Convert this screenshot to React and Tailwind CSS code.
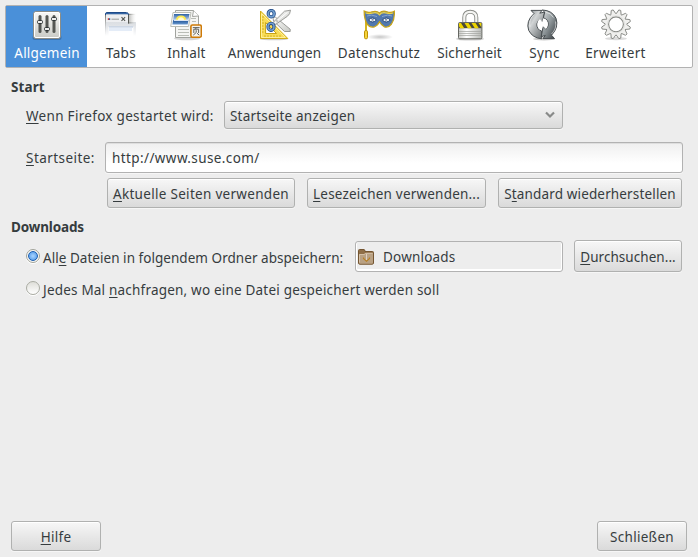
import React from "react";

function U({ children }) {
  return (
    <span className="underline decoration-1 underline-offset-[2px] [text-decoration-skip-ink:none]">
      {children}
    </span>
  );
}

function GeneralIcon() {
  return (
    <svg width="32" height="32" viewBox="0 0 32 32">
      <defs>
        <linearGradient id="gen" x1="0" y1="0" x2="0" y2="1">
          <stop offset="0" stopColor="#fafaf8" />
          <stop offset="1" stopColor="#c9cac5" />
        </linearGradient>
      </defs>
      <rect x="1.5" y="26" width="29" height="5" rx="2" fill="#1f3f66" opacity=".35" />
      <rect x="2.5" y="2.5" width="27" height="27" rx="2.5" fill="url(#gen)" stroke="#8b8d88" />
      <rect x="3.5" y="3.5" width="25" height="25" rx="1.5" fill="none" stroke="#fff" />
      <g fill="#555753">
        <rect x="7.5" y="6" width="3" height="18" rx="1.5" />
        <rect x="14.5" y="6" width="3" height="18" rx="1.5" />
        <rect x="21.5" y="6" width="3" height="18" rx="1.5" />
      </g>
      <g fill="#eeeeec" stroke="#2e3436">
        <rect x="6.5" y="11.5" width="5" height="3" rx="1" />
        <rect x="13.5" y="18.5" width="5" height="3" rx="1" />
        <rect x="20.5" y="8.5" width="5" height="3" rx="1" />
      </g>
    </svg>
  );
}

function TabsIcon() {
  return (
    <svg width="32" height="32" viewBox="0 0 32 32">
      <defs>
        <linearGradient id="tb" x1="0" y1="0" x2="0" y2="1">
          <stop offset="0" stopColor="#d3d7db" />
          <stop offset=".5" stopColor="#dfe2e6" />
          <stop offset="1" stopColor="#fff" />
        </linearGradient>
        <linearGradient id="tr" x1="0" y1="0" x2="1" y2="0">
          <stop offset="0" stopColor="#777974" />
          <stop offset="1" stopColor="#dddddb" stopOpacity="0" />
        </linearGradient>
        <linearGradient id="ts" x1="0" y1="0" x2="0" y2="1">
          <stop offset="0" stopColor="#6a6c68" />
          <stop offset="1" stopColor="#ddd" stopOpacity="0" />
        </linearGradient>
      </defs>
      <path d="M0 5H23V13H31V27H0Z" fill="url(#tb)" />
      <path d="M1 5.5H23V13H1Z" fill="#eeeff1" />
      <rect x="23" y="5" width="8" height="9" fill="url(#tr)" opacity=".6" />
      <path d="M23 4.8h8v1.2h-8zM23 13.5h7v1h-7z" fill="url(#tr)" />
      <rect x="0" y="5" width="1" height="22" fill="url(#ts)" />
      <path d="M23.5 5v9.5" stroke="#555753" />
      <path d="M.5 6V5Q.5 3.5 2 3.5H21.5Q23.5 3.5 23.5 6" fill="none" stroke="#204a87" />
      <path d="M1 4.6H23" stroke="#3465a4" strokeWidth="1.3" />
      <path d="M2.8 9.2h1.4v1.8H2.8z" fill="#cc3b3b" />
      <path d="M4 9.2h1.2v1.8H4z" fill="#3465a4" />
      <path d="M6.5 10.2h7.5" stroke="#999b98" />
      <path d="M16.5 8.2l3.6 3.6M20.1 8.2l-3.6 3.6" stroke="#555753" strokeWidth="1.1" />
      <rect x="3.5" y="18" width="25" height="9" fill="#fff" opacity=".9" />
      <path d="M4 18h24" stroke="#b7c8df" />
      <path d="M4 20.5h23" stroke="#e4ecf7" strokeWidth="3" />
    </svg>
  );
}

function ContentIcon() {
  return (
    <svg width="32" height="32" viewBox="0 0 32 32">
      <defs>
        <linearGradient id="sky" x1="0" y1="0" x2="0" y2="1">
          <stop offset="0" stopColor="#2c61a5" />
          <stop offset=".55" stopColor="#b5cde9" />
          <stop offset=".65" stopColor="#285b9d" />
          <stop offset="1" stopColor="#6b9ad0" />
        </linearGradient>
      </defs>
      <ellipse cx="17" cy="29.5" rx="13" ry="1.8" fill="#000" opacity=".16" />
      <path d="M5.5 1.5H23.5L28.5 7V28.5H5.5Z" fill="#f5f5f3" stroke="#a1a39e" />
      <path d="M23.5 1.5L22.5 7.5L28.5 7" fill="#fff" stroke="#a1a39e" />
      <path d="M8 20.5H19M8 23.5H19M8 26.5H19M21 9.5h5M22 12.5h4" stroke="#babdb6" />
      <path d="M3 3.5H21L18.5 17.5H.7Z" fill="#fff" stroke="#babdb6" />
      <path d="M4 5H19.5L17.7 15.5H2.4Z" fill="url(#sky)" />
      <path d="M6 11Q6 6.4 11 6.4T16 11Z" fill="#fce94f" />
      <path d="M8 11Q8 8.3 11 8.3T14 11Z" fill="#fffbd0" />
      <path d="M4 11.3h14" stroke="#fff" strokeWidth="1" />
      <rect x="20.9" y="16" width="10.4" height="12.2" rx="1.5" fill="#f6f4ee" stroke="#ce7a07" strokeWidth="1.6" />
      <path d="M22.8 18.6h6.8M26.2 18.6l-.7 1.6M23.8 24v-3.8h4.8V24M26.2 21.2v2.3l-2.9 2.6M27 24.2l2.3 2" fill="none" stroke="#5a5c58" strokeWidth=".95" />
    </svg>
  );
}

function AppsIcon() {
  return (
    <svg width="32" height="32" viewBox="0 0 32 32">
      <defs>
        <linearGradient id="bl" x1="0" y1="0" x2="1" y2="1">
          <stop offset="0" stopColor="#fff" />
          <stop offset="1" stopColor="#c8cac5" />
        </linearGradient>
      </defs>
      <ellipse cx="15" cy="30" rx="14" ry="1.3" fill="#000" opacity=".2" />
      <path d="M1.5 2V29.5H28.8Z" fill="#f9dc55" stroke="#d1ac16" />
      <path d="M2.6 4.6V28.4H26.3Z" fill="none" stroke="#fff1a0" />
      <path d="M6.6 13.5V24.5H17.5Z" fill="#fff" stroke="#c9a414" />
      <path d="M3 8h2M3 11h1.5M3 14h2M3 17h1.5M3 20h2M3 23h1.5M6 28v-1.7M9 28v-1.7M12 28v-1.7M15 28v-1.7M18 28v-1.7M21 28v-1.7" stroke="#c4a00f" strokeWidth=".8" />
      <path d="M14 8.5L16.5 8.2L31.2 20.2V22.5H25.5L14.5 12Z" fill="url(#bl)" stroke="#858783" strokeWidth=".8" />
      <path d="M13.5 14L25.5 2.2L31.5 1.2Q31.2 5.2 28.5 7.2L16.5 15.5Z" fill="url(#bl)" stroke="#858783" strokeWidth=".8" />
      <path d="M15.8 13.8L28.5 3.3" stroke="#fff" />
      <circle cx="18" cy="12" r=".7" fill="#777974" />
      <g fill="none">
        <ellipse cx="12.2" cy="4.7" rx="3" ry="3.2" stroke="#204a87" strokeWidth="3.2" />
        <ellipse cx="12.2" cy="4.7" rx="3" ry="3.2" stroke="#729fcf" strokeWidth="1.6" />
        <ellipse cx="12" cy="17.8" rx="3" ry="3.5" stroke="#204a87" strokeWidth="3.2" />
        <ellipse cx="12" cy="17.8" rx="3" ry="3.5" stroke="#729fcf" strokeWidth="1.6" />
      </g>
    </svg>
  );
}

function PrivacyIcon() {
  return (
    <svg width="32" height="32" viewBox="0 0 32 32">
      <defs>
        <radialGradient id="msh">
          <stop offset="0" stopColor="#000" stopOpacity=".22" />
          <stop offset="1" stopColor="#000" stopOpacity="0" />
        </radialGradient>
      </defs>
      <ellipse cx="17" cy="28" rx="13" ry="3" fill="url(#msh)" />
      <path d="M3 3V29" stroke="#c4a000" strokeWidth="2" />
      <path d="M3 4V22" stroke="#f2d84b" strokeWidth=".8" />
      <path d="M1.2 2.2Q5 4.2 9 2.8Q13.5 1.4 16.5 4Q19.5 1.2 24 2.8Q28 4.2 31.3 2.2Q31.8 10 28.5 15Q25.5 19 21.5 17.8Q18.5 16.5 16.5 12.8Q14.5 16.8 11.3 17.8Q7 19 4 14.8Q1.2 10 1.2 2.2Z" fill="#5178ae" stroke="#c7a41a" strokeWidth="1.3" />
      <path d="M2.6 4Q6 5.2 9 4.2Q14 2.6 16.5 5.8Q19 2.6 24 4.2Q27 5.2 30 4" fill="none" stroke="#edd44b" strokeWidth="1.3" />
      <path d="M4 7Q8 5 14 7.5M19 7.5Q25 5 29 7" fill="none" stroke="#87a5cc" />
      <path d="M5.5 11Q9.2 7 13.5 11Q9.5 15 5.5 11ZM19.3 11Q23.5 7 27.3 11Q23.3 15 19.3 11Z" fill="#f4f5f6" stroke="#294b7c" />
      <path d="M8.6 10.9h2M22.1 10.9h2" stroke="#31527f" strokeWidth="1" />
      <rect x="1.5" y="21.5" width="3" height="8.3" rx="1.3" fill="#f5d33b" stroke="#bd9206" />
    </svg>
  );
}

function LockIcon() {
  return (
    <svg width="32" height="32" viewBox="0 0 32 32">
      <defs>
        <linearGradient id="lk" x1="0" y1="0" x2="1" y2="0">
          <stop offset="0" stopColor="#c8c9c6" />
          <stop offset=".35" stopColor="#fff" />
          <stop offset="1" stopColor="#b6b8b4" />
        </linearGradient>
        <clipPath id="lkc"><rect x="4.5" y="14" width="23" height="6" /></clipPath>
      </defs>
      <ellipse cx="16" cy="30" rx="14" ry="1.6" fill="#000" opacity=".18" />
      <path d="M10.3 14V8.5Q10.3 2.8 16.2 2.8T22.3 8.5V14" fill="none" stroke="#888a85" strokeWidth="4" />
      <path d="M10.3 14V8.5Q10.3 2.8 16.2 2.8T22.3 8.5V14" fill="none" stroke="#f4f4f2" strokeWidth="2.2" />
      <rect x="4.5" y="13.5" width="23.4" height="16.3" rx="1.2" fill="url(#lk)" stroke="#656762" />
      <path d="M5 22.5H27.5M5 24.5H27.5M5 26.5H27.5" stroke="#a0a29e" strokeWidth=".7" />
      <rect x="5" y="14" width="22.4" height="5.2" fill="#4a4939" />
      <g clipPath="url(#lkc)" fill="#edd400">
        <path d="M5 14h2l3.2 5.2h-4L5 17.2zM10.5 14h4l3.3 5.2h-4zM17.5 14h4l3.3 5.2h-4zM24.5 14h3v4.6z" />
      </g>
    </svg>
  );
}

function SyncIcon() {
  return (
    <svg className="mr-[2px]" width="32" height="32" viewBox="0 0 32 32">
      <defs>
        <linearGradient id="sy1" x1="0" y1="0" x2="1" y2="1">
          <stop offset="0" stopColor="#7b8184" />
          <stop offset=".35" stopColor="#d2d5d6" />
          <stop offset="1" stopColor="#555b5e" />
        </linearGradient>
        <linearGradient id="sy2" x1="0" y1="0" x2="1" y2="1">
          <stop offset="0" stopColor="#e1e4e5" />
          <stop offset=".5" stopColor="#8e9699" />
          <stop offset="1" stopColor="#30363a" />
        </linearGradient>
      </defs>
      <ellipse cx="17" cy="30" rx="11" ry="1.5" fill="#000" opacity=".2" />
      <path d="M4 1.4H15L12.8 4.2L17.8 3L15.2 13.6L12.6 10.8Q8 14.7 11 19.5Q12.3 21.6 14.7 22.1V29.8Q5.5 29 1.7 21.4Q-1.5 12.1 7 4.6Z" fill="url(#sy1)" stroke="#4a5053" />
      <path d="M27.5 29.6H16L18.3 26.5L14.2 27.7L16.2 17.3L18.9 20.2Q22.9 16 20.4 11.6Q19 9.5 16.4 8.8L17.7 3L15.3 1Q25.3 1.4 29 9.3Q32 18.5 24.5 26.2Z" fill="url(#sy2)" stroke="#454b4e" />
      <path d="M7 5.5Q1.7 10.8 2.9 17.8M24.5 25Q30 19.5 28.5 12.5M18.5 3Q24 4 26.4 8.5" fill="none" stroke="#fff" opacity=".55" />
      <path d="M13 10Q9.2 13 10.8 17.7Q12 20.5 14.6 21.2L15.7 17L19 20Q21.8 16.7 20.3 12.8Q19 10 16.3 9.3L15.2 13Z" fill="#fff" />
    </svg>
  );
}

const TEETH = [0, 30, 60, 90, 120, 150, 180, 210, 240, 270, 300, 330];

function GearIcon() {
  return (
    <svg width="32" height="32" viewBox="0 0 32 32">
      <ellipse cx="16" cy="29.6" rx="11" ry="1.7" fill="#000" opacity=".14" />
      <g fill="#f0f0ee" stroke="#868884" strokeWidth=".9">
        {TEETH.map((a) => (
          <path key={a} d="M13.2 5.6L15 .7H17L18.8 5.6" transform={`rotate(${a + 15} 16 15.3)`} />
        ))}
      </g>
      <circle cx="16" cy="15.3" r="8.9" fill="none" stroke="#efefed" strokeWidth="3.2" />
      <circle cx="16" cy="15.3" r="7.4" fill="#fff" stroke="#868884" strokeWidth="1.1" />
      <circle cx="16" cy="15.3" r="8.5" fill="none" stroke="#d9dad7" strokeWidth=".7" />
    </svg>
  );
}

function FolderIcon() {
  return (
    <svg width="16" height="16" viewBox="0 0 16 16">
      <path d="M.5 14V1.5Q.5.5 1.5.5H6Q7 .5 7 2.5H14.5Q15.5 2.5 15.5 3.5V14Q15.5 15.2 14 15.2H2Q.5 15.2.5 14Z" fill="#8f6f48" stroke="#745531" />
      <path d="M1 5H6L7 4H15V13.7Q15 14.7 14 14.7H2Q1 14.7 1 13.7Z" fill="#b9a183" />
      <path d="M1.5 13.5V5.5H6.5L7.5 4.3H14.5" fill="none" stroke="#d5c1a7" />
      <path d="M5.5 8.5V9.5L8.5 12.3L11.5 9.5V8.5" fill="none" stroke="#b77f23" strokeWidth="1.1" />
      <path d="M8.5 5.5V11" stroke="#fff" strokeDasharray="1 1" />
    </svg>
  );
}

const TABS = [
  ["Allgemein", GeneralIcon, "w-[81px] bg-[#4a90d9] text-white", "ml-[1px] tracking-[0.2px]"],
  ["Tabs", TabsIcon, "w-[68px]", "tracking-[0.3px]"],
  ["Inhalt", ContentIcon, "w-[62px]", "ml-[1px] tracking-[0.2px]"],
  ["Anwendungen", AppsIcon, "w-[115px]", "tracking-[0.05px]"],
  ["Datenschutz", PrivacyIcon, "w-[94px]", "tracking-[0.3px]"],
  ["Sicherheit", LockIcon, "w-[87px]", "tracking-[0.15px]"],
  ["Sync", SyncIcon, "w-[62px]", "ml-[1px] tracking-[0.4px]"],
  ["Erweitert", GearIcon, "w-[81px]", "tracking-[0.3px]"],
];

function Button({ className, children }) {
  return (
    <button
      className={`flex shrink-0 items-center rounded-[3px] border border-[#b0b1b0] bg-linear-to-b from-[#f7f7f7] to-[#dadada] whitespace-nowrap shadow-[inset_0_1px_0_#fff,0_1px_0_#f6f6f6] ${className}`}
    >
      {children}
    </button>
  );
}

export default function App() {
  return (
    <div className="flex h-[557px] w-[698px] flex-col overflow-hidden bg-[#ededed] pt-[5px] font-['Noto_Sans','Open_Sans',sans-serif] text-[13.5px] leading-[20px] tracking-[0.3px] text-[#363c3e]">
      <nav className="ml-[5px] flex h-[63px] w-[688px] shrink-0 rounded-[2px] border border-[#b2b2b2] bg-white">
        {TABS.map(([name, Icon, cell, tracking]) => (
          <div key={name} className={`flex shrink-0 flex-col items-center pt-[3px] ${cell}`}>
            <Icon />
            <span className={`mt-[2px] whitespace-nowrap ${tracking}`}>{name}</span>
          </div>
        ))}
      </nav>

      <h2 className="mt-[9px] ml-[11px] h-5 shrink-0 text-[13.5px] font-bold tracking-[0.1px]">Start</h2>
      <div className="mt-1 ml-[26px] flex h-7 shrink-0 items-center">
        <label className="w-[198px] shrink-0 pt-[2px] whitespace-nowrap"><U>W</U>enn Firefox gestartet wird:</label>
        <Button className="h-7 w-[339px] justify-between pr-[6px] pl-[5px] tracking-[0.2px]">
          <span className="pt-[2px]">Startseite anzeigen</span>
          <svg width="12" height="8" viewBox="0 0 12 8">
            <path d="M2 1.5L6 5.5L10 1.5" fill="none" stroke="#888a89" strokeWidth="2.2" />
          </svg>
        </Button>
      </div>

      <div className="mt-[13px] ml-[26px] flex h-[31px] shrink-0 items-center">
        <label className="w-[79px] shrink-0 tracking-[0.45px] whitespace-nowrap"><U>S</U>tartseite:</label>
        <div className="flex h-[31px] w-[578px] items-center rounded-[3px] border border-[#b2b2b2] bg-linear-to-b from-[#efefef] to-white to-70% pl-[6px] tracking-[0.4px] shadow-[inset_0_1px_0_#dedede,0_1px_0_#f6f6f6]">
          http://www.suse.com/
        </div>
      </div>
      <div className="mt-[5px] ml-[107px] flex shrink-0 gap-3">
        <Button className="h-[30px] w-[188px] justify-center pt-[2px]"><span><U>A</U>ktuelle Seiten verwenden</span></Button>
        <Button className="h-[30px] w-[179px] justify-center pt-[2px] tracking-[0.2px]"><span><U>L</U>esezeichen verwenden...</span></Button>
        <Button className="h-[30px] w-[184px] justify-center pt-[2px] tracking-[0.15px]"><span>S<U>t</U>andard wiederherstellen</span></Button>
      </div>

      <h2 className="mt-[9px] ml-[11px] h-5 shrink-0 text-[13.5px] font-bold tracking-[-0.15px]">Downloads</h2>
      <div className="mt-[3px] ml-[26px] flex h-8 shrink-0 items-center">
        <span className="mb-[1px] flex size-[14px] shrink-0 items-center justify-center rounded-full border border-[#a0a298] bg-[#f8f8f6] shadow-[0_1px_0_#fff]">
          <span className="size-[10px] rounded-full border border-[#1c5eb0] bg-radial from-[#a9d5ff] to-[#4592e6]" />
        </span>
        <label className="ml-[3px] w-[312px] shrink-0 pt-[4px] tracking-[0.04px] whitespace-nowrap">All<U>e</U> Dateien in folgendem Ordner abspeichern:</label>
        <div className="mt-px flex h-[31px] w-[208px] shrink-0 items-center gap-[9px] rounded-[3px] border border-[#b2b2b2] pl-[2px] tracking-[0.2px] shadow-[inset_0_-2px_0_#fff,inset_1px_0_0_#fff,inset_-1px_0_0_#fff]">
          <FolderIcon />
          <span>Downloads</span>
        </div>
        <Button className="ml-[11px] h-8 w-[108px] justify-center pt-[2px] tracking-[0.05px]"><span><U>D</U>urchsuchen...</span></Button>
      </div>
      <div className="mt-[8px] ml-[26px] flex h-5 shrink-0 items-center">
        <span className="mb-[4px] size-[14px] shrink-0 rounded-full border border-[#a9aba2] bg-linear-to-b from-[#deded9] to-white shadow-[0_1px_0_#fff]" />
        <label className="ml-[3px] tracking-[0.2px] whitespace-nowrap">Jedes Mal <U>n</U>achfragen, wo eine Datei gespeichert werden soll</label>
      </div>

      <footer className="mt-auto mr-[11px] mb-[6px] ml-[11px] flex shrink-0 justify-between">
        <Button className="h-[30px] w-[90px] justify-center pt-[2px]"><span><U>H</U>ilfe</span></Button>
        <Button className="h-[30px] w-[90px] justify-center pt-[2px]">Schließen</Button>
      </footer>
    </div>
  );
}
